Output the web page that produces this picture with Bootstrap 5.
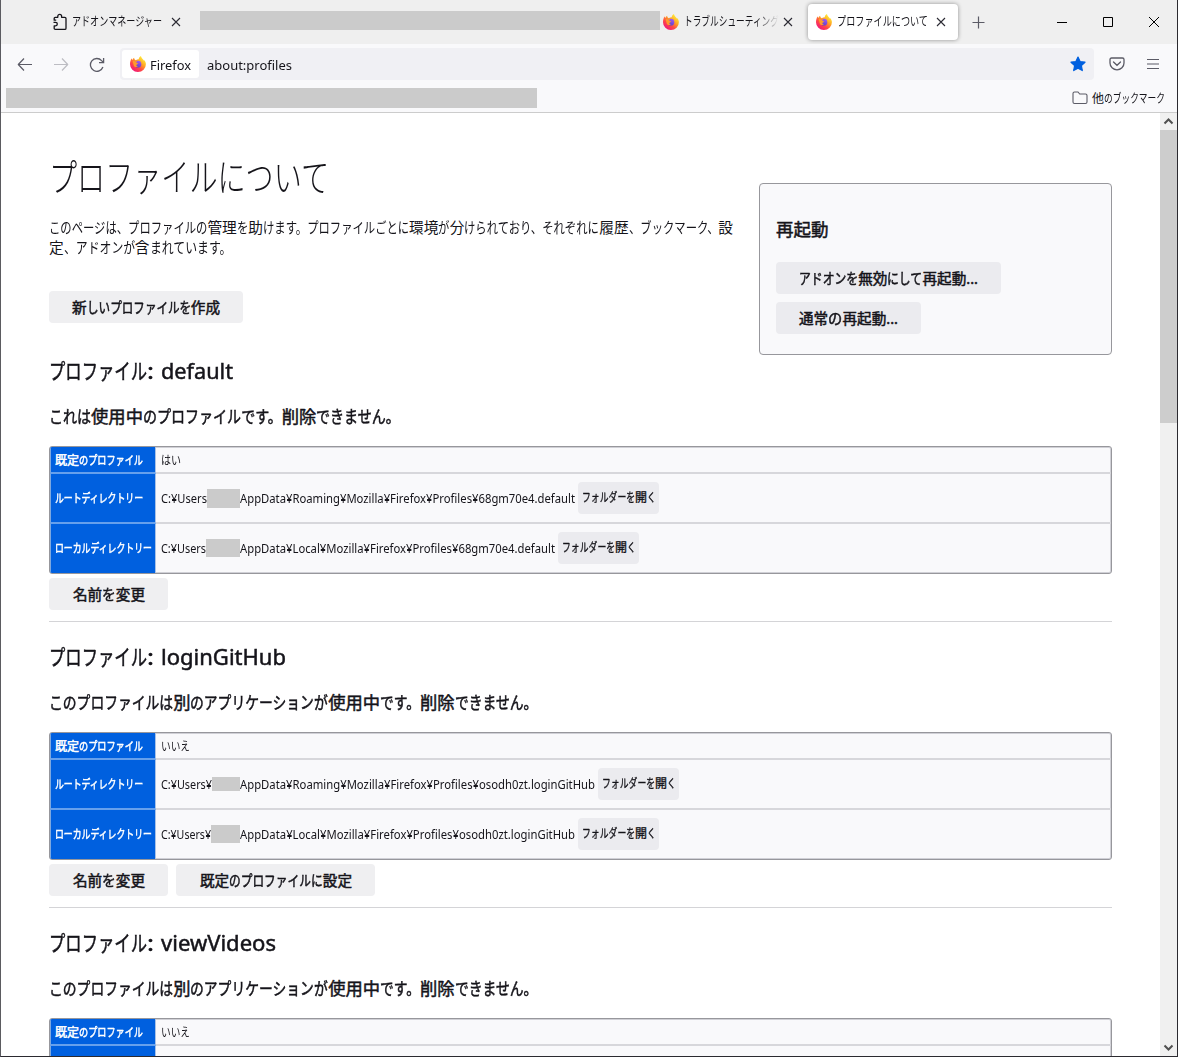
<!DOCTYPE html>
<html lang="ja">
<head>
<meta charset="utf-8">
<title>プロファイルについて</title>
<link href="https://cdn.jsdelivr.net/npm/bootstrap@5.3.0/dist/css/bootstrap.min.css" rel="stylesheet">
<style>
body{font-family:"Noto Sans","Noto Sans CJK JP",sans-serif;font-size:15px;color:#15141a;width:1178px;height:1057px;overflow:hidden}
svg{display:block;flex:none}
.window-frame{height:1057px;border:1px solid #2b2a30;border-top:0;border-left-color:#5b5b60}
.tab-strip{height:44px;background:#efefef;font-size:12.5px;color:#15141a}
.tab-item{height:36px}
.tab-item .fit{padding-top:1px}
.tab-active{width:150px;background:#fff;border-radius:4px;box-shadow:0 0 4px rgba(0,0,0,.4);padding-left:8px}
.redacted{background:#cbcbcb;flex:none}
.tool-row{height:40px;background:#f9f9fb;padding-left:16px}
.url-field{width:974px;height:32px;background:#f0f0f4;border-radius:4px;padding:2px;margin-left:15px}
.identity{width:77px;height:28px;background:#fff;border-radius:3px;padding-left:8px;font-size:13px}
.identity .fit,.url-text{padding-top:3px}
.url-text{font-size:13px;margin-left:8px}
.bookmark-row{height:29px;background:#f9f9fb;border-bottom:1px solid #ccc;padding:0 12px 1px 5px;font-size:12px}
.bookmark-row .fit{padding-top:2px}
.page-area{height:943px}
.page-body{width:1159px;padding:33px 48px 0;overflow:hidden}
.scroll-track{width:17px;background:#f0f0f0}
.scroll-thumb{height:293px;background:#cdcdcd}
.intro{height:204px}
.page-title{font-size:38px;font-weight:300;line-height:60px;height:60px;margin:0}
.intro-text{font-size:14.7px;line-height:20px;margin:11px 0 34px}
.restart-box{width:353px;height:172px;margin-top:37px;background:#f9f9fb;border:1px solid #97979c;border-radius:4px;padding:30px 16px 0}
.restart-box h3{font-size:17.5px;line-height:30px;margin:0 0 18px}
.restart-box h3,.btn-soft,.profile h2,.profile h3,.info-head{font-weight:400;-webkit-text-stroke:.5px currentColor}
.btn-soft{background:#efeff1;border:0;border-radius:4px;height:32px;padding:0 23px 0 24px;font-size:14.6px;line-height:32px;color:#15141a;display:block}
.restart-box .btn-soft{padding:0 23px}
.intro-text+.btn-soft{padding:0 23px}
.restart-box .btn-soft,.btn-soft.btn-mini{background:#ebebef}
.btn-soft.btn-mini{font-size:12px;padding:0 3px 0 4px;margin-left:3px;-webkit-text-stroke-width:.35px}
.profile{height:286px}
.profile h2{font-size:22px;line-height:40px;height:44px;margin:0}
.profile h3{font-size:17.3px;line-height:46px;margin:0 0 6px}
.info-grid{height:128px;border:1px solid #97979c;border-radius:3px;background:#f9f9fb;box-shadow:inset 0 0 0 1px #d0d0d6;overflow:hidden;font-size:12px}
.info-line{height:50px}
.info-line:first-child{height:27px}
.info-head{width:106px;background:#0060df;color:#fff;padding:2px 0 0 4px;border-left:1px solid #7ea9e0;border-right:1px solid #a9c2e6;border-bottom:2px solid #66a0ec}
.info-data{padding-left:5px;border-bottom:2px solid #d7d7db}
.info-data>.fit{padding-top:2px}
.info-line:last-child>div{border-bottom:0}
.info-line:nth-child(3) .info-data,.info-line:nth-child(3) .info-head{padding-bottom:2px}
.divider{height:1px;background:#d4d4d7;margin-top:11px}
.fit{white-space:nowrap;display:inline-block}
.run{display:inline-block;transform-origin:0 50%;white-space:nowrap}
.fade-end{-webkit-mask-image:linear-gradient(90deg,#000 75%,transparent)}
</style>
<script src="https://cdn.jsdelivr.net/npm/bootstrap@5.3.0/dist/js/bootstrap.bundle.min.js"></script>
</head>
<body>
<svg width="0" height="0" class="position-absolute">
 <defs>
  <linearGradient id="flame" x1=".85" y1=".1" x2=".2" y2=".95"><stop offset="0" stop-color="#fff13f"/><stop offset=".35" stop-color="#ffa822"/><stop offset=".65" stop-color="#ff4a45"/><stop offset="1" stop-color="#f0147c"/></linearGradient>
  <linearGradient id="globe" x1=".7" y1="0" x2=".3" y2="1"><stop offset="0" stop-color="#a259f5"/><stop offset="1" stop-color="#5a3fc8"/></linearGradient>
  <symbol id="fox" viewBox="0 0 16 16">
   <path fill="url(#flame)" d="M15.400 6c-.3-.9-1-1.800-1.600-2.200.1.400.1.700.1 1C13 2.800 11.200 2 10.900 0 9.400.9 8.700 2.300 8.700 3.300 7.500 3.300 6.500 3.700 5.800 4.200 4.700 3.900 4.200 2.600 4.100 1.700 3.200 2.200 2.600 3.200 2.300 3.900 1.700 3.600 1.700 2.700 1.700 2.300.7 3.400 0 6.200 0 8.300A7.900 7.700 0 0 0 8 16a7.900 7.700 0 0 0 7.900-7.700c0-.8-.2-1.600-.5-2.300z"/>
   <circle cx="7.900" cy="8.200" r="3.400" fill="url(#globe)"/>
   <path fill="#ff9a2b" d="M2.600 5.500c1-.6 2.200-.5 3 .1.500-.3 1.300-.3 1.700-.2-.7.400-1 .9-1 1.400.5.500 1.300.4 2 .5 0 .9-1.500 1-1.900 1.600-.2 1 .9 1.600 1.900 1.200-1.500 1.800-4.800.9-4.800-1.700z"/>
  </symbol>
  <symbol id="cross" viewBox="0 0 10 10"><path d="M1 1l8 8M9 1L1 9" fill="none" stroke="#2b2a33" stroke-width="1.100"/></symbol>
 </defs>
</svg>
<div class="window-frame d-flex flex-column">
 <div class="tab-strip d-flex align-items-center flex-shrink-0">
  <div class="tab-item d-flex align-items-center" style="width:199px;padding-left:51px">
   <svg width="16" height="18" viewBox="0 0 16 18"><path d="M2.200 6V5.300q0-1 1-1h2.600V3.200a1.900 1.900 0 0 1 3.800 0v1.100h3.200q1.200 0 1.200 1.200v9.700q0 1.200-1.200 1.200H3.400q-1.200 0-1.200-1.200v-2.400h1.400a1.700 1.700 0 0 0 0-3.400H1.500M2.200 6v1.200h2" fill="none" stroke="#15141a" stroke-width="1.300" stroke-linejoin="round"/></svg>
   <span class="fit" style="margin-left:4px" data-w="90">アドオンマネージャー</span>
   <svg style="margin-left:9px" width="10" height="10"><use href="#cross"/></svg>
  </div>
  <div class="redacted" style="width:460px;height:19px;margin-top:-3px"></div>
  <div class="tab-item d-flex align-items-center" style="width:148px;padding-left:3px">
   <svg width="16" height="16"><use href="#fox"/></svg>
   <span class="fit fade-end" style="margin-left:5px" data-w="95">トラブルシューティング</span>
   <svg style="margin-left:4px" width="10" height="10"><use href="#cross"/></svg>
  </div>
  <div class="tab-item tab-active d-flex align-items-center">
   <svg width="16" height="16"><use href="#fox"/></svg>
   <span class="fit" style="margin-left:5px" data-w="91">プロファイルについて</span>
   <svg style="margin-left:8px" width="10" height="10"><use href="#cross"/></svg>
  </div>
  <svg style="margin-left:14px" width="13" height="13" viewBox="0 0 13 13"><path d="M6.500.5v12M.5 6.500h12" stroke="#5b5b66" stroke-width="1.200"/></svg>
  <div class="d-flex ms-auto align-items-center" style="gap:35px;padding-right:17px">
   <svg width="11" height="11" viewBox="0 0 11 11"><path d="M0 5.500h10" stroke="#000"/></svg>
   <svg width="11" height="11" viewBox="0 0 11 11"><path d="M.5.5h9v9H.5z" fill="none" stroke="#000"/></svg>
   <svg width="11" height="11" viewBox="0 0 11 11"><path d="M0 0l10 10M10 0L0 10" stroke="#000"/></svg>
  </div>
 </div>
 <div class="tool-row d-flex align-items-center flex-shrink-0">
  <svg width="16" height="16" viewBox="0 0 16 16"><path d="M15 8.500H1.500M7 2.500L1.300 8.500 7 14.500" fill="none" stroke="#5b5b66" stroke-width="1.200" stroke-linejoin="round"/></svg>
  <svg style="margin-left:20px" width="16" height="16" viewBox="0 0 16 16"><path d="M1 8.500h13.500M9 2.500l5.700 6L9 14.500" fill="none" stroke="#bdbdc3" stroke-width="1.200" stroke-linejoin="round"/></svg>
  <svg style="margin-left:20px" width="16" height="16" viewBox="0 0 16 16"><path d="M13.900 11A6.400 6.400 0 1 1 12.600 4.600L14 6M14.600 2v4.600H10" fill="none" stroke="#5b5b66" stroke-width="1.300"/></svg>
  <div class="url-field d-flex align-items-center">
   <div class="identity d-flex align-items-center"><svg width="16" height="16"><use href="#fox"/></svg><span class="fit" style="margin-left:4px" data-w="41">Firefox</span></div>
   <span class="url-text fit" data-w="85">about:profiles</span>
   <svg class="ms-auto" style="margin-right:6px" width="16" height="16" viewBox="0 0 16 16"><path d="M8 1l2.100 4.600 4.900.6-3.600 3.400.9 5L8 12.200l-4.300 2.400.9-5L1 6.200l4.900-.6z" fill="#0060df" stroke="#0060df" stroke-width="1.200" stroke-linejoin="round"/></svg>
  </div>
  <svg style="margin-left:15px" width="16" height="16" viewBox="0 0 16 16"><path d="M2.600 2h10.800q1.600 0 1.600 1.600V7A7 6.800 0 0 1 1 7V3.600Q1 2 2.600 2z" fill="none" stroke="#5b5b66" stroke-width="1.300"/><path d="M4.500 6L8 9.300 11.500 6" fill="none" stroke="#5b5b66" stroke-width="1.300" stroke-linecap="round"/></svg>
  <svg style="margin-left:20px" width="16" height="16" viewBox="0 0 16 16"><path d="M2 3.500h12M2 8h12M2 12.500h12" stroke="#5b5b66" stroke-width="1.200"/></svg>
 </div>
 <div class="bookmark-row d-flex align-items-center flex-shrink-0">
  <div class="redacted" style="width:531px;height:20px"></div>
  <div class="d-flex align-items-center ms-auto">
   <svg width="16" height="14" viewBox="0 0 16 14"><path d="M1 11V2.500Q1 1 2.500 1H6l1.700 2h5.800Q15 3 15 4.500V11q0 1.500-1.500 1.500h-11Q1 12.500 1 11z" fill="none" stroke="#5b5b66" stroke-width="1.100"/></svg>
   <span class="fit" style="margin-left:4px" data-w="73">他のブックマーク</span>
  </div>
 </div>
 <div class="page-area d-flex">
  <main class="page-body">
   <div class="intro d-flex justify-content-between">
    <div>
     <h1 class="page-title"><span class="fit" data-w="280">プロファイルについて</span></h1>
     <p class="intro-text"><span class="fit" data-w="684">このページは、プロファイルの管理を助けます。プロファイルごとに環境が分けられており、それぞれに履歴、ブックマーク、設</span><br><span class="fit" data-w="182">定、アドオンが含まれています。</span></p>
     <button class="btn-soft"><span class="fit" data-w="148">新しいプロファイルを作成</span></button>
    </div>
    <aside class="restart-box">
     <h3>再起動</h3>
     <button class="btn-soft mb-2"><span class="fit" data-w="179">アドオンを無効にして再起動...</span></button>
     <button class="btn-soft"><span class="fit" data-w="99">通常の再起動...</span></button>
    </aside>
   </div>
   <div id="profiles"></div>
  </main>
  <div class="scroll-track flex-shrink-0 d-flex flex-column">
   <svg width="17" height="17" viewBox="0 0 17 17"><path d="M4.500 10.500l4-4 4 4" fill="none" stroke="#505050" stroke-width="2"/></svg>
   <div class="scroll-thumb"></div>
   <svg class="mt-auto" width="17" height="17" viewBox="0 0 17 17"><path d="M4.500 6.500l4 4 4-4" fill="none" stroke="#505050" stroke-width="2"/></svg>
  </div>
 </div>
</div>
<script>
const inUse='このプロファイルは別のアプリケーションが使用中です。削除できません。';
const profiles=[
 {name:'default',nameW:72,note:'これは使用中のプロファイルです。削除できません。',noteW:351,flag:'はい',flagW:20,
  rows:[{pre:'C:¥Users',preW:46,gap:33,gapH:19,path:'AppData¥Roaming¥Mozilla¥Firefox¥Profiles¥68gm70e4.default',w:335},
        {pre:'C:¥Users',preW:45,gap:34,gapH:18,path:'AppData¥Local¥Mozilla¥Firefox¥Profiles¥68gm70e4.default',w:315}],btns:[['名前を変更',72]]},
 {name:'loginGitHub',nameW:125,note:inUse,noteW:488,flag:'いいえ',flagW:29,
  rows:[{pre:'C:¥Users¥',preW:51,gap:28,gapH:14,path:'AppData¥Roaming¥Mozilla¥Firefox¥Profiles¥osodh0zt.loginGitHub',w:355},
        {pre:'C:¥Users¥',preW:50,gap:29,gapH:18,path:'AppData¥Local¥Mozilla¥Firefox¥Profiles¥osodh0zt.loginGitHub',w:335}],btns:[['名前を変更',72],['既定のプロファイルに設定',152]]},
 {name:'viewVideos',nameW:115,note:inUse,noteW:488,flag:'いいえ',flagW:29,rows:[],btns:[]}
];
const fit=(t,w)=>`<span class="fit" data-w="${w}">${t}</span>`;
const line=(h,hw,d)=>`<div class="info-line d-flex"><div class="info-head d-flex align-items-center">${h?fit(h,hw):''}</div><div class="info-data d-flex align-items-center flex-grow-1">${d}</div></div>`;
document.getElementById('profiles').innerHTML=profiles.map(p=>`<section class="profile">
 <h2>${fit('プロファイル',98)}${fit(':',7)}<span style="margin-left:7px">${fit(p.name,p.nameW)}</span></h2>
 <h3>${fit(p.note,p.noteW)}</h3>
 <div class="info-grid">${line('既定のプロファイル',88,fit(p.flag,p.flagW))}${p.rows.map((r,i)=>line(i?'ローカルディレクトリー':'ルートディレクトリー',i?97:88,
  `${fit(r.pre,r.preW)}<span class="redacted" style="width:${r.gap}px;height:${r.gapH}px"></span>${fit(r.path,r.w)}<button class="btn-soft btn-mini">${fit('フォルダーを開く',74)}</button>`)).join('')||line('',0,'')}</div>
 <div class="d-flex gap-2 mt-1">${p.btns.map(b=>`<button class="btn-soft">${fit(b[0],b[1])}</button>`).join('')}</div>
 <div class="divider"></div></section>`).join('');

// Condense kana runs to proportional UI widths; ideographs keep their full advance.
function condense(el){
 const target=+el.dataset.w,text=el.textContent;
 const hasKana=/[\u3001-\u30ff]/.test(text);
 const parts=hasKana?text.match(/[\u3001-\u30ff]+|[^\u3001-\u30ff]+/g):[text];
 el.textContent='';
 const runs=parts.map(t=>{const s=document.createElement('span');s.className='run';s.textContent=t;el.appendChild(s);
  return {s,w:s.getBoundingClientRect().width,k:!hasKana||/[\u3001-\u30ff]/.test(t)}});
 const sum=k=>runs.filter(r=>r.k===k).reduce((a,r)=>a+r.w,0);
 const f=(target-sum(false))/sum(true);
 runs.forEach(r=>{if(r.k){r.s.style.width=r.w*f+'px';r.s.style.transform=`scaleX(${f})`;}});
}
document.querySelectorAll('.fit').forEach(condense);
</script>
</body>
</html>
